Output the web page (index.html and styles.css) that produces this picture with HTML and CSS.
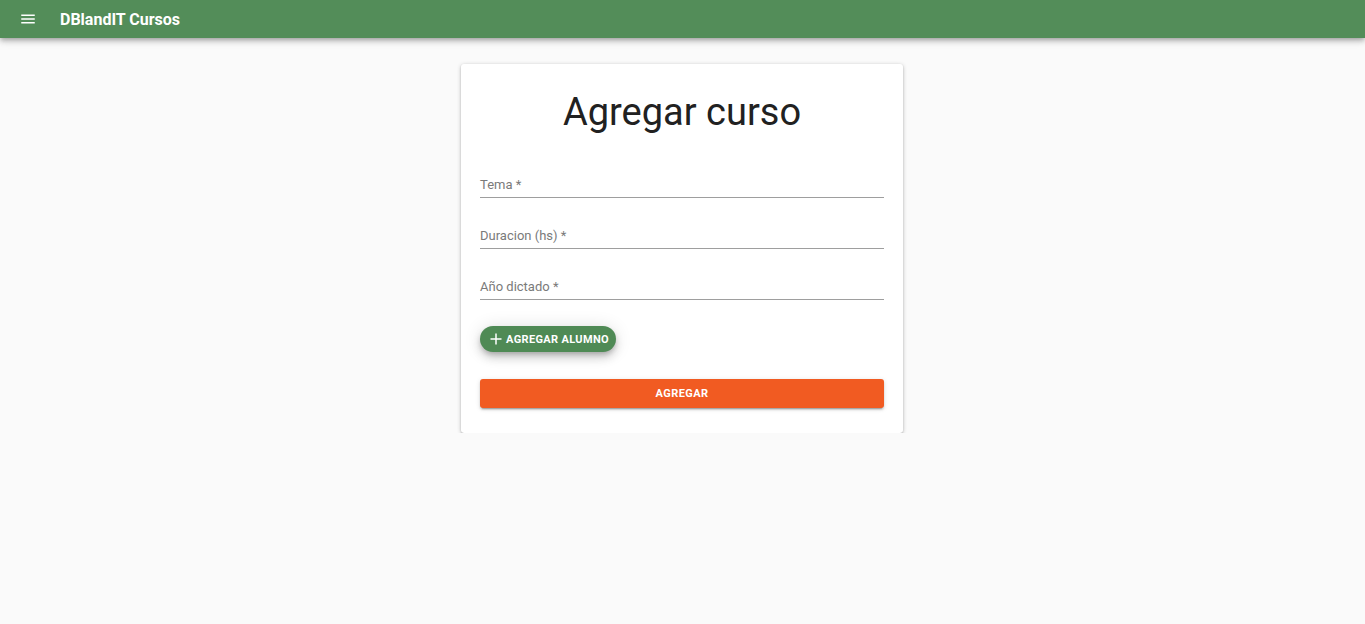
FILE: index.html
```html
<!DOCTYPE html>
<html lang="es">
<head>
<meta charset="utf-8">
<title>DBlandIT Cursos</title>
<link rel="stylesheet" href="styles.css">
</head>
<body>
<header class="appbar">
  <svg class="menu-icon" width="18" height="18" viewBox="0 0 24 24"><path d="M3 18h18v-2H3v2zm0-5h18v-2H3v2zm0-7v2h18V6H3z" fill="#fff"/></svg>
  <span class="brand">DBlandIT Cursos</span>
</header>
<main class="main">
  <section class="card">
    <h1 class="title">Agregar curso</h1>
    <div class="field field-first"><span class="label">Tema *</span></div>
    <div class="field"><span class="label">Duracion (hs) *</span></div>
    <div class="field"><span class="label">Año dictado *</span></div>
    <button class="btn-add-student"><svg width="12" height="12" viewBox="0 0 12 12"><path d="M6 0.5v11M0.5 6h11" stroke="#fff" stroke-width="1.5" fill="none"/></svg><span>Agregar alumno</span></button>
    <button class="btn-submit">Agregar</button>
  </section>
</main>
</body>
</html>
```
FILE: styles.css
```css
* { box-sizing: border-box; }
body {
  margin: 0;
  background: #fafafa;
  font-family: Roboto, "Noto Sans", sans-serif;
  color: #212121;
}
.appbar {
  height: 38px;
  background: #538d59;
  display: flex;
  align-items: center;
  padding-left: 19px;
  box-shadow: 0 2px 4px -1px rgba(0,0,0,.2), 0 4px 5px 0 rgba(0,0,0,.14), 0 1px 10px 0 rgba(0,0,0,.12);
}
.menu-icon { display: block; }
.brand {
  margin-left: 23px;
  color: #fff;
  font-weight: 700;
  font-size: 16px;
}
.main {
  display: flex;
  justify-content: center;
  padding-top: 26px;
  padding-right: 1px;
}
.card {
  width: 442px;
  background: #fff;
  border-radius: 3px;
  padding: 0 19px 25px;
  box-shadow: 0 1px 4px 0 rgba(0,0,0,.22), 0 1px 2px 0 rgba(0,0,0,.16), 0 2px 1px -1px rgba(0,0,0,.14);
}
.title {
  margin: 24px 0 0;
  font-size: 38px;
  line-height: 48px;
  font-weight: 400;
  text-align: center;
  color: #212121;
}
.field {
  margin-top: 28px;
  padding-bottom: 2px;
  border-bottom: 1px solid rgba(0,0,0,.38);
}
.field-first { margin-top: 39px; }
.label {
  display: block;
  font-size: 13px;
  line-height: 20px;
  color: #7a7a7a;
}
.btn-add-student {
  margin-top: 26px;
  height: 26px;
  display: flex;
  align-items: center;
  gap: 4px;
  padding: 0 7px 0 10px;
  background: #4f8a55;
  color: #fff;
  border: 0;
  border-radius: 13px;
  font-family: inherit;
  font-weight: 700;
  font-size: 11px;
  letter-spacing: 0.35px;
  text-transform: uppercase;
  box-shadow: 0 3px 5px -1px rgba(0,0,0,.2), 0 6px 10px 0 rgba(0,0,0,.14), 0 1px 18px 0 rgba(0,0,0,.12);
}
.btn-add-student svg { display: block; }
.btn-submit {
  display: block;
  width: 100%;
  margin-top: 27px;
  height: 29px;
  background: #f15b22;
  color: #fff;
  border: 0;
  border-radius: 3px;
  font-family: inherit;
  font-weight: 700;
  font-size: 11px;
  letter-spacing: 0.4px;
  text-transform: uppercase;
  box-shadow: 0 3px 1px -2px rgba(0,0,0,.2), 0 2px 2px 0 rgba(0,0,0,.14), 0 1px 5px 0 rgba(0,0,0,.12);
}
```
